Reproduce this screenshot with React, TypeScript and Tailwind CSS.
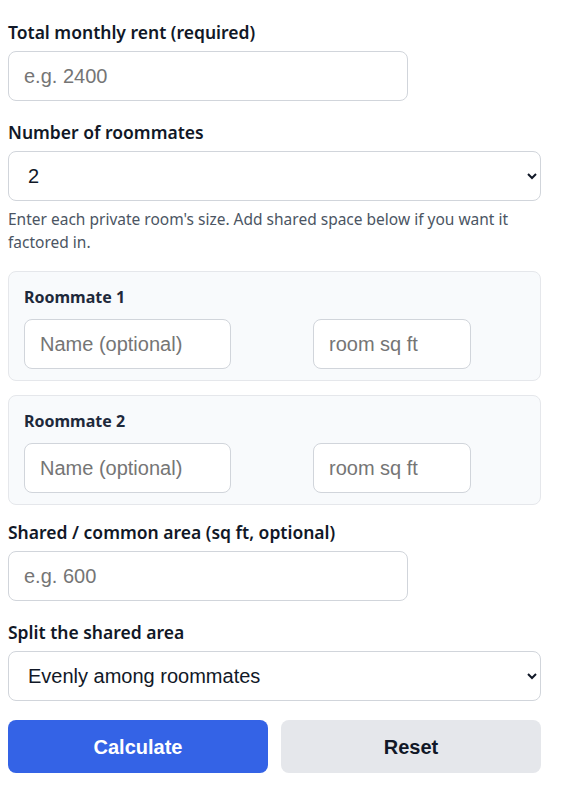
import { useState } from 'react'

const labelCls = 'block text-[17.5px] leading-6 font-semibold text-[#111827] mb-[7px]'
const inputCls =
  'block h-[50px] rounded-lg border border-[#d1d5db] bg-white px-[15px] text-[20px] text-[#111827] placeholder:text-[#757575] focus:outline-none'
const selectCls =
  'block w-full h-[50px] rounded-lg border border-[#d1d5db] bg-white pl-[15px] pr-2 text-[20px] text-[#111827] focus:outline-none'

export default function App() {
  const [count, setCount] = useState('2')
  const mates = Array.from({ length: Number(count) }, (_, i) => i + 1)

  return (
    <div className="px-2 pt-5 w-[549px] bg-white" style={{ fontFamily: '"Noto Sans", sans-serif' }}>
      <label className={labelCls}>Total monthly rent (required)</label>
      <input className={`${inputCls} w-[400px] font-['Liberation_Sans',Arial,sans-serif]`} placeholder="e.g. 2400" />

      <label className={`${labelCls} mt-[19px]`}>Number of roommates</label>
      <select
        value={count}
        onChange={(e) => setCount(e.target.value)}
        className={`${selectCls} font-['Liberation_Sans',Arial,sans-serif]`}
      >
        <option value="2">2</option>
        <option value="3">3</option>
        <option value="4">4</option>
        <option value="5">5</option>
      </select>
      <p className="mt-[7px] w-[520px] text-[15.5px] leading-[23px] text-[#4b5563]">
        Enter each private room's size. Add shared space below if you want it factored in.
      </p>

      <div className="mt-[17px] flex flex-col gap-[14px]">
        {mates.map((n) => (
          <div key={n} className="rounded-lg border border-[#e5e7eb] bg-[#f8fafc] px-[15px] pt-[13px] pb-[11px]">
            <div className="text-[16px] leading-6 font-bold text-[#1e293b] mb-[10px]">Roommate {n}</div>
            <div className="flex gap-[82px]">
              <input className={`${inputCls} w-[207px] font-['Liberation_Sans',Arial,sans-serif]`} placeholder="Name (optional)" />
              <input className={`${inputCls} w-[158px] font-['Liberation_Sans',Arial,sans-serif]`} placeholder="room sq ft" />
            </div>
          </div>
        ))}
      </div>

      <label className={`${labelCls} mt-[15px]`}>Shared / common area (sq ft, optional)</label>
      <input className={`${inputCls} w-[400px] font-['Liberation_Sans',Arial,sans-serif]`} placeholder="e.g. 600" />

      <label className={`${labelCls} mt-[19px]`}>Split the shared area</label>
      <select className={`${selectCls} font-['Liberation_Sans',Arial,sans-serif]`}>
        <option>Evenly among roommates</option>
        <option>Proportional to room size</option>
      </select>

      <div className="mt-[19px] flex gap-[13px] font-['Liberation_Sans',Arial,sans-serif]">
        <button className="flex-1 h-[53px] rounded-lg bg-[#3463e6] text-white text-[20px] font-bold">Calculate</button>
        <button className="flex-1 h-[53px] rounded-lg bg-[#e5e7eb] text-[#111827] text-[20px] font-bold">Reset</button>
      </div>
    </div>
  )
}
